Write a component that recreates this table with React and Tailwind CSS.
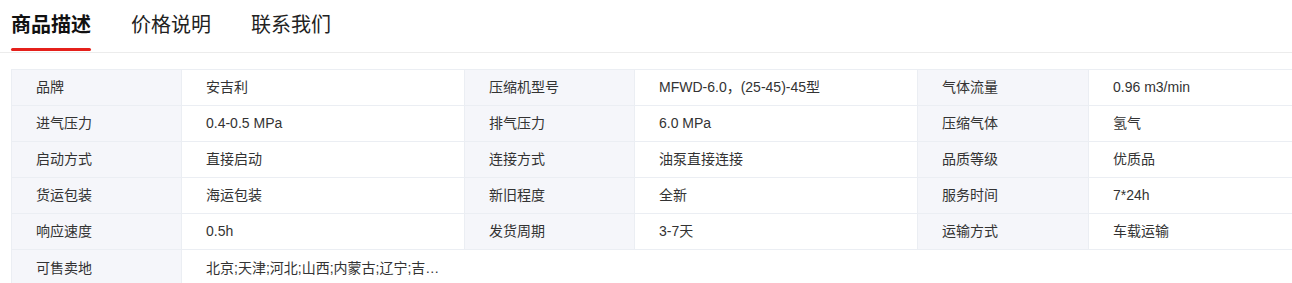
import { useState } from "react";

// product spec rows: [label, value] pairs, three per row
const rows = [
    [["品牌", "安吉利"], ["压缩机型号", "MFWD-6.0，(25-45)-45型"], ["气体流量", "0.96 m3/min"]],
    [["进气压力", "0.4-0.5 MPa"], ["排气压力", "6.0 MPa"], ["压缩气体", "氢气"]],
    [["启动方式", "直接启动"], ["连接方式", "油泵直接连接"], ["品质等级", "优质品"]],
    [["货运包装", "海运包装"], ["新旧程度", "全新"], ["服务时间", "7*24h"]],
    [["响应速度", "0.5h"], ["发货周期", "3-7天"], ["运输方式", "车载运输"]],
];

const tabs = ["商品描述", "价格说明", "联系我们"];

export default function App() {
    const [active, setActive] = useState(0);

    return (
        <div
            className="w-[1292px] h-[283px] overflow-hidden bg-white text-[#333]"
            style={{fontFamily: '"Liberation Sans", "Noto Sans CJK SC", sans-serif'}}>
            {/* tabs */}
            <div className="flex gap-10 pl-[11px] h-[53px] border-b border-[#ececec]">
                {tabs.map((t, i) => (
                    <button
                        key={t}
                        onClick={() => setActive(i)}
                        className={`relative h-full text-[20px] leading-[52px] pb-1 ${active === i ? "font-bold text-[#111]" : "text-[#222]"}`}>
                        <span className="relative -top-[1px]">{t}</span>
                        {active === i && (
                            <span className="absolute left-0 right-0 bottom-[1px] h-[3px] bg-[#e5201b] rounded-sm"></span>
                        )}
                    </button>
                ))}
            </div>

            {/* spec table */}
            <div
                className="ml-[11px] mt-4 w-max grid grid-cols-[170px_283px_170px_283px_171px_283px] border-t border-l border-[#ebeef3] text-[14px]">
                {rows.map((row) =>
                    row.map(([k, v]) => [
                        <div key={k}
                             className="h-9 flex items-center pl-6 bg-[#f5f6fa] border-r border-b border-[#ebeef3]">
                            {k}
                        </div>,
                        <div key={k + "v"}
                             className="h-9 flex items-center pl-6 bg-white border-r border-b border-[#ebeef3]">
                            {v}
                        </div>,
                    ])
                )}
                <div className="h-9 flex items-center pl-6 bg-[#f5f6fa] border-r border-[#ebeef3]">
                    可售卖地
                </div>
                <div className="h-9 flex items-center pl-6 pr-6 bg-white min-w-0">
                    <span className="truncate">北京;天津;河北;山西;内蒙古;辽宁;吉林;黑龙江;上海;江苏</span>
                </div>
            </div>
        </div>
    );
}
